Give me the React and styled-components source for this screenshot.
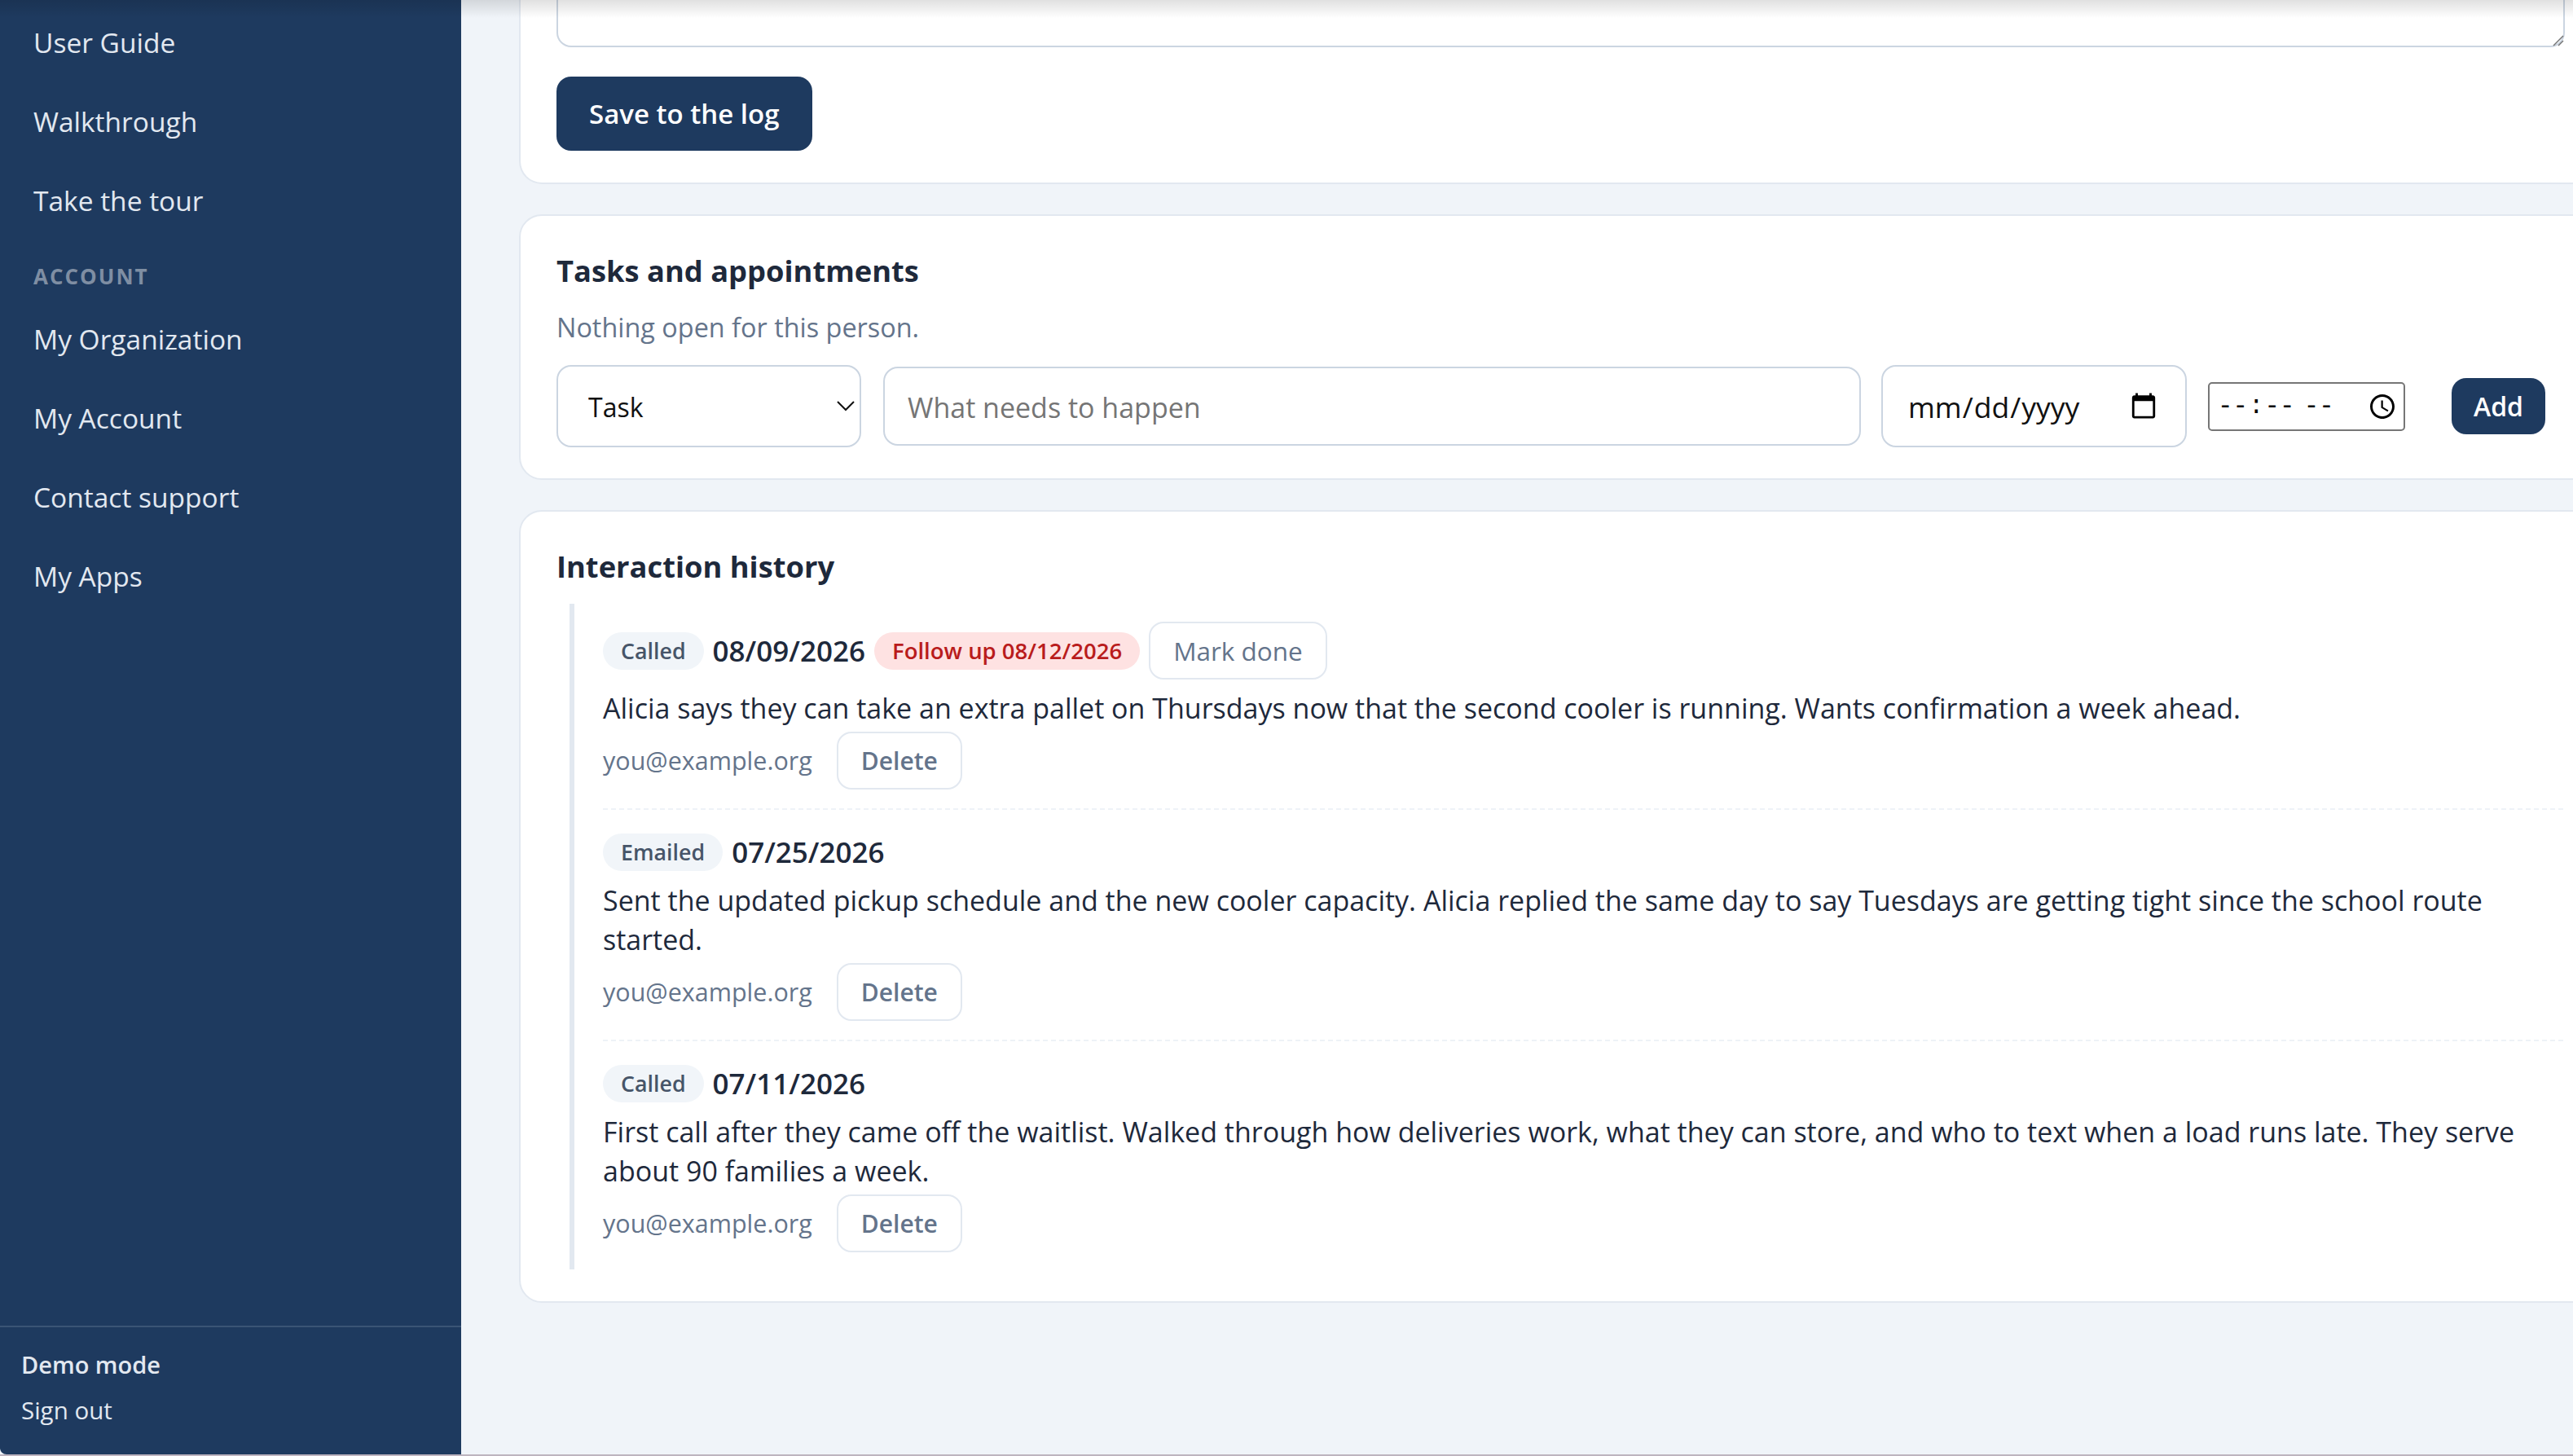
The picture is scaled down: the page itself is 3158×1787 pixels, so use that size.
import React from 'react';
import styled, { createGlobalStyle } from 'styled-components';

const Global = createGlobalStyle`
  html, body { margin: 0; padding: 0; height: 100%; overflow: hidden; background: #f0f4f9; }
  body { font-family: "Open Sans", "Noto Sans", sans-serif; color: #1e293b; }
  * { box-sizing: border-box; }
`;

const Shell = styled.div`
  display: flex;
  height: 1785px;
  width: 3158px;
  overflow: hidden;
  position: relative;
`;

const Strip = styled.div`
  height: 2px;
  background: #bdb4bf;
`;

const Shade = styled.div`
  position: absolute;
  top: 0;
  left: 0;
  right: 0;
  height: 22px;
  background: linear-gradient(to bottom, rgba(0, 0, 0, .12), rgba(0, 0, 0, 0));
  pointer-events: none;
`;

const Sidebar = styled.aside`
  width: 566px;
  flex: none;
  background: #1e3a5f;
  border-bottom-left-radius: 8px;
  display: flex;
  flex-direction: column;
`;

const Nav = styled.nav`
  flex: 1;
  display: flex;
  flex-direction: column;
  padding: 3px 41px 0;
`;

const NavLink = styled.a`
  height: 97px;
  display: flex;
  align-items: center;
  font-size: 33.5px;
  color: #e2e8f0;
`;

const NavLabel = styled.div`
  margin-top: 16px;
  height: 57px;
  display: flex;
  align-items: center;
  font-size: 26px;
  font-weight: 700;
  letter-spacing: 2px;
  color: #7f8ea3;
`;

const SideFoot = styled.div`
  height: 158px;
  flex: none;
  border-top: 2px solid #3a5475;
  padding: 27px 26px 0;
  display: flex;
  flex-direction: column;
  gap: 18px;
`;

const DemoMode = styled.div`
  font-size: 29px;
  line-height: 38px;
  font-weight: 600;
  color: #e2e8f0;
`;

const SignOut = styled.a`
  font-size: 29.5px;
  line-height: 38px;
  color: #e2e8f0;
`;

const Main = styled.main`
  flex: 1;
  min-width: 0;
  padding-left: 71px;
  overflow: hidden;
  display: flex;
  flex-direction: column;
  gap: 37px;
`;

const Card = styled.section`
  width: 2556px;
  flex: none;
  background: #fff;
  border: 2px solid #e2e8f0;
  border-radius: 28px;
  padding: ${p => p.$pad || '0 44px 39px'};
  ${p => p.$clipped && `
    border-top: none;
    border-top-left-radius: 0;
    border-top-right-radius: 0;
  `}
`;

const NoteWrap = styled.div`
  position: relative;
  width: 2465px;
  margin-bottom: 36px;
`;

const NoteBox = styled.textarea`
  display: block;
  width: 100%;
  height: 58px;
  resize: none;
  background: #fff;
  border: 2px solid #cbd5e1;
  border-top: none;
  border-radius: 0 0 18px 18px;
  outline: none;
`;

const Grip = styled.svg`
  position: absolute;
  right: 1px;
  bottom: 1px;
  width: 16px;
  height: 16px;
`;

const PrimaryButton = styled.button`
  height: ${p => p.$h}px;
  padding: 0 ${p => p.$px}px;
  border: none;
  border-radius: 18px;
  background: #1e3a5f;
  color: #fff;
  font-family: inherit;
  font-size: ${p => p.$size}px;
  font-weight: 600;
  flex: none;
`;

const Heading = styled.h2`
  margin: 0;
  font-size: 36.3px;
  line-height: 50px;
  font-weight: 700;
  color: #1e293b;
`;

const Muted = styled.p`
  margin: 20px 0 0;
  font-size: 32.4px;
  line-height: 48px;
  color: #64748b;
`;

const TaskForm = styled.div`
  display: flex;
  align-items: center;
  margin-top: 23px;
`;

const field = `
  background: #fff;
  border: 2px solid #cbd5e1;
  border-radius: 18px;
  font-family: inherit;
  color: #111;
  outline: none;
  flex: none;
`;

const SelectWrap = styled.div`
  position: relative;
  flex: none;
`;

const KindSelect = styled.select`
  ${field}
  display: block;
  appearance: none;
  width: 374px;
  height: 101px;
  padding: 2px 37px 0;
  font-size: 32px;
`;

const Chevron = styled.svg`
  position: absolute;
  right: 7px;
  top: 42px;
  width: 24px;
  height: 16px;
`;

const TaskInput = styled.input`
  ${field}
  width: 1200px;
  height: 97px;
  margin-left: 27px;
  padding: 2px 28px 0;
  font-size: 34px;
  &::placeholder { color: #757575; opacity: 1; }
`;

const DateInput = styled.input`
  ${field}
  width: 375px;
  height: 101px;
  margin-left: 25px;
  padding: 0 30px;
  font-size: 35.5px;
  &::-webkit-calendar-picker-indicator { width: 36px; height: 36px; margin: 0 3px 0 0; padding: 0; }
`;

const TimeInput = styled.input`
  width: 242px;
  height: 60px;
  margin-left: 26px;
  flex: none;
  border: 2px solid #767676;
  border-radius: 5px;
  padding: 0 8px 0 9px;
  background: #fff;
  font-family: "Liberation Mono", monospace;
  font-size: 30.8px;
  &::-webkit-calendar-picker-indicator { width: 36px; height: 36px; margin: 0; padding: 0; }
`;

const AddSlot = styled.div`
  margin-left: 57px;
  flex: none;
`;

const History = styled.div`
  margin-top: 21px;
  margin-left: 16px;
  border-left: 6px solid #e2e8f0;
  padding-left: 35px;
  width: 2447px;
`;

const Entry = styled.article`
  padding: ${p => (p.$first ? 22 : 28)}px 0 ${p => (p.$last ? 21 : 23)}px;
  ${p => !p.$last && 'border-bottom: 2px dashed #eef2f7;'}
`;

const EntryHead = styled.div`
  display: flex;
  align-items: center;
  gap: 11px;
  min-height: 48px;
`;

const Badge = styled.span`
  height: 46px;
  padding: 0 22px;
  border-radius: 23px;
  display: inline-flex;
  align-items: center;
  background: ${p => (p.$alert ? '#fee2e2' : '#f1f5f9')};
  color: ${p => (p.$alert ? '#b91c1c' : '#475569')};
  font-size: ${p => (p.$alert ? 27.5 : 26.8)}px;
  font-weight: 600;
  flex: none;
`;

const EntryDate = styled.span`
  font-size: 35px;
  line-height: 48px;
  font-weight: 600;
  color: #1e293b;
`;

const GhostButton = styled.button`
  height: 71px;
  padding: 0 28px;
  border: 2px solid #e2e8f0;
  border-radius: 18px;
  background: #fff;
  font-family: inherit;
  font-size: ${p => p.$size || 31.5}px;
  font-weight: ${p => p.$weight || 500};
  color: #64748b;
  flex: none;
`;

const NoteText = styled.p`
  margin: 11px 0 0;
  font-size: 34px;
  line-height: 48.5px;
  color: #1e293b;
`;

const Meta = styled.div`
  display: flex;
  align-items: center;
  gap: 30px;
  margin-top: 4px;
`;

const Author = styled.span`
  font-size: 30.5px;
  color: #64748b;
`;

const navTop = ['User Guide', 'Walkthrough', 'Take the tour'];
const navAccount = ['My Organization', 'My Account', 'Contact support', 'My Apps'];

const entries = [
  {
    kind: 'Called',
    date: '08/09/2026',
    followUp: 'Follow up 08/12/2026',
    text: 'Alicia says they can take an extra pallet on Thursdays now that the second cooler is running. Wants confirmation a week ahead.',
  },
  {
    kind: 'Emailed',
    date: '07/25/2026',
    text: 'Sent the updated pickup schedule and the new cooler capacity. Alicia replied the same day to say Tuesdays are getting tight since the school route started.',
  },
  {
    kind: 'Called',
    date: '07/11/2026',
    text: 'First call after they came off the waitlist. Walked through how deliveries work, what they can store, and who to text when a load runs late. They serve about 90 families a week.',
  },
];

export default function App() {
  return (
    <>
      <Global />
      <Shell>
        <Sidebar>
          <Nav>
            {navTop.map(n => <NavLink key={n}>{n}</NavLink>)}
            <NavLabel>ACCOUNT</NavLabel>
            {navAccount.map(n => <NavLink key={n}>{n}</NavLink>)}
          </Nav>
          <SideFoot>
            <DemoMode>Demo mode</DemoMode>
            <SignOut>Sign out</SignOut>
          </SideFoot>
        </Sidebar>
        <Main>
          <Card $clipped>
            <NoteWrap>
              <NoteBox />
              <Grip viewBox="0 0 16 16">
                <path d="M15 3 3 15M15 9 9 15" stroke="#777" strokeWidth="1.5" fill="none" />
              </Grip>
            </NoteWrap>
            <PrimaryButton $h={91} $px={40} $size={33}>Save to the log</PrimaryButton>
          </Card>
          <Card $pad="42px 44px 38px">
            <Heading>Tasks and appointments</Heading>
            <Muted>Nothing open for this person.</Muted>
            <TaskForm>
              <SelectWrap>
                <KindSelect defaultValue="Task"><option>Task</option></KindSelect>
                <Chevron viewBox="0 0 24 16">
                  <path d="M2 3l10 10L22 3" stroke="#111" strokeWidth="2" fill="none" />
                </Chevron>
              </SelectWrap>
              <TaskInput placeholder="What needs to happen" />
              <DateInput type="date" />
              <TimeInput type="time" />
              <AddSlot><PrimaryButton $h={69} $px={27} $size={32}>Add</PrimaryButton></AddSlot>
            </TaskForm>
          </Card>
          <Card $pad="42px 44px 39px">
            <Heading>Interaction history</Heading>
            <History>
              {entries.map((e, i) => (
                <Entry key={e.date} $first={i === 0} $last={i === entries.length - 1}>
                  <EntryHead>
                    <Badge>{e.kind}</Badge>
                    <EntryDate>{e.date}</EntryDate>
                    {e.followUp && <Badge $alert>{e.followUp}</Badge>}
                    {e.followUp && <GhostButton>Mark done</GhostButton>}
                  </EntryHead>
                  <NoteText>{e.text}</NoteText>
                  <Meta>
                    <Author>you@example.org</Author>
                    <GhostButton $size={30} $weight={600}>Delete</GhostButton>
                  </Meta>
                </Entry>
              ))}
            </History>
          </Card>
        </Main>
        <Shade />
      </Shell>
      <Strip />
    </>
  );
}
